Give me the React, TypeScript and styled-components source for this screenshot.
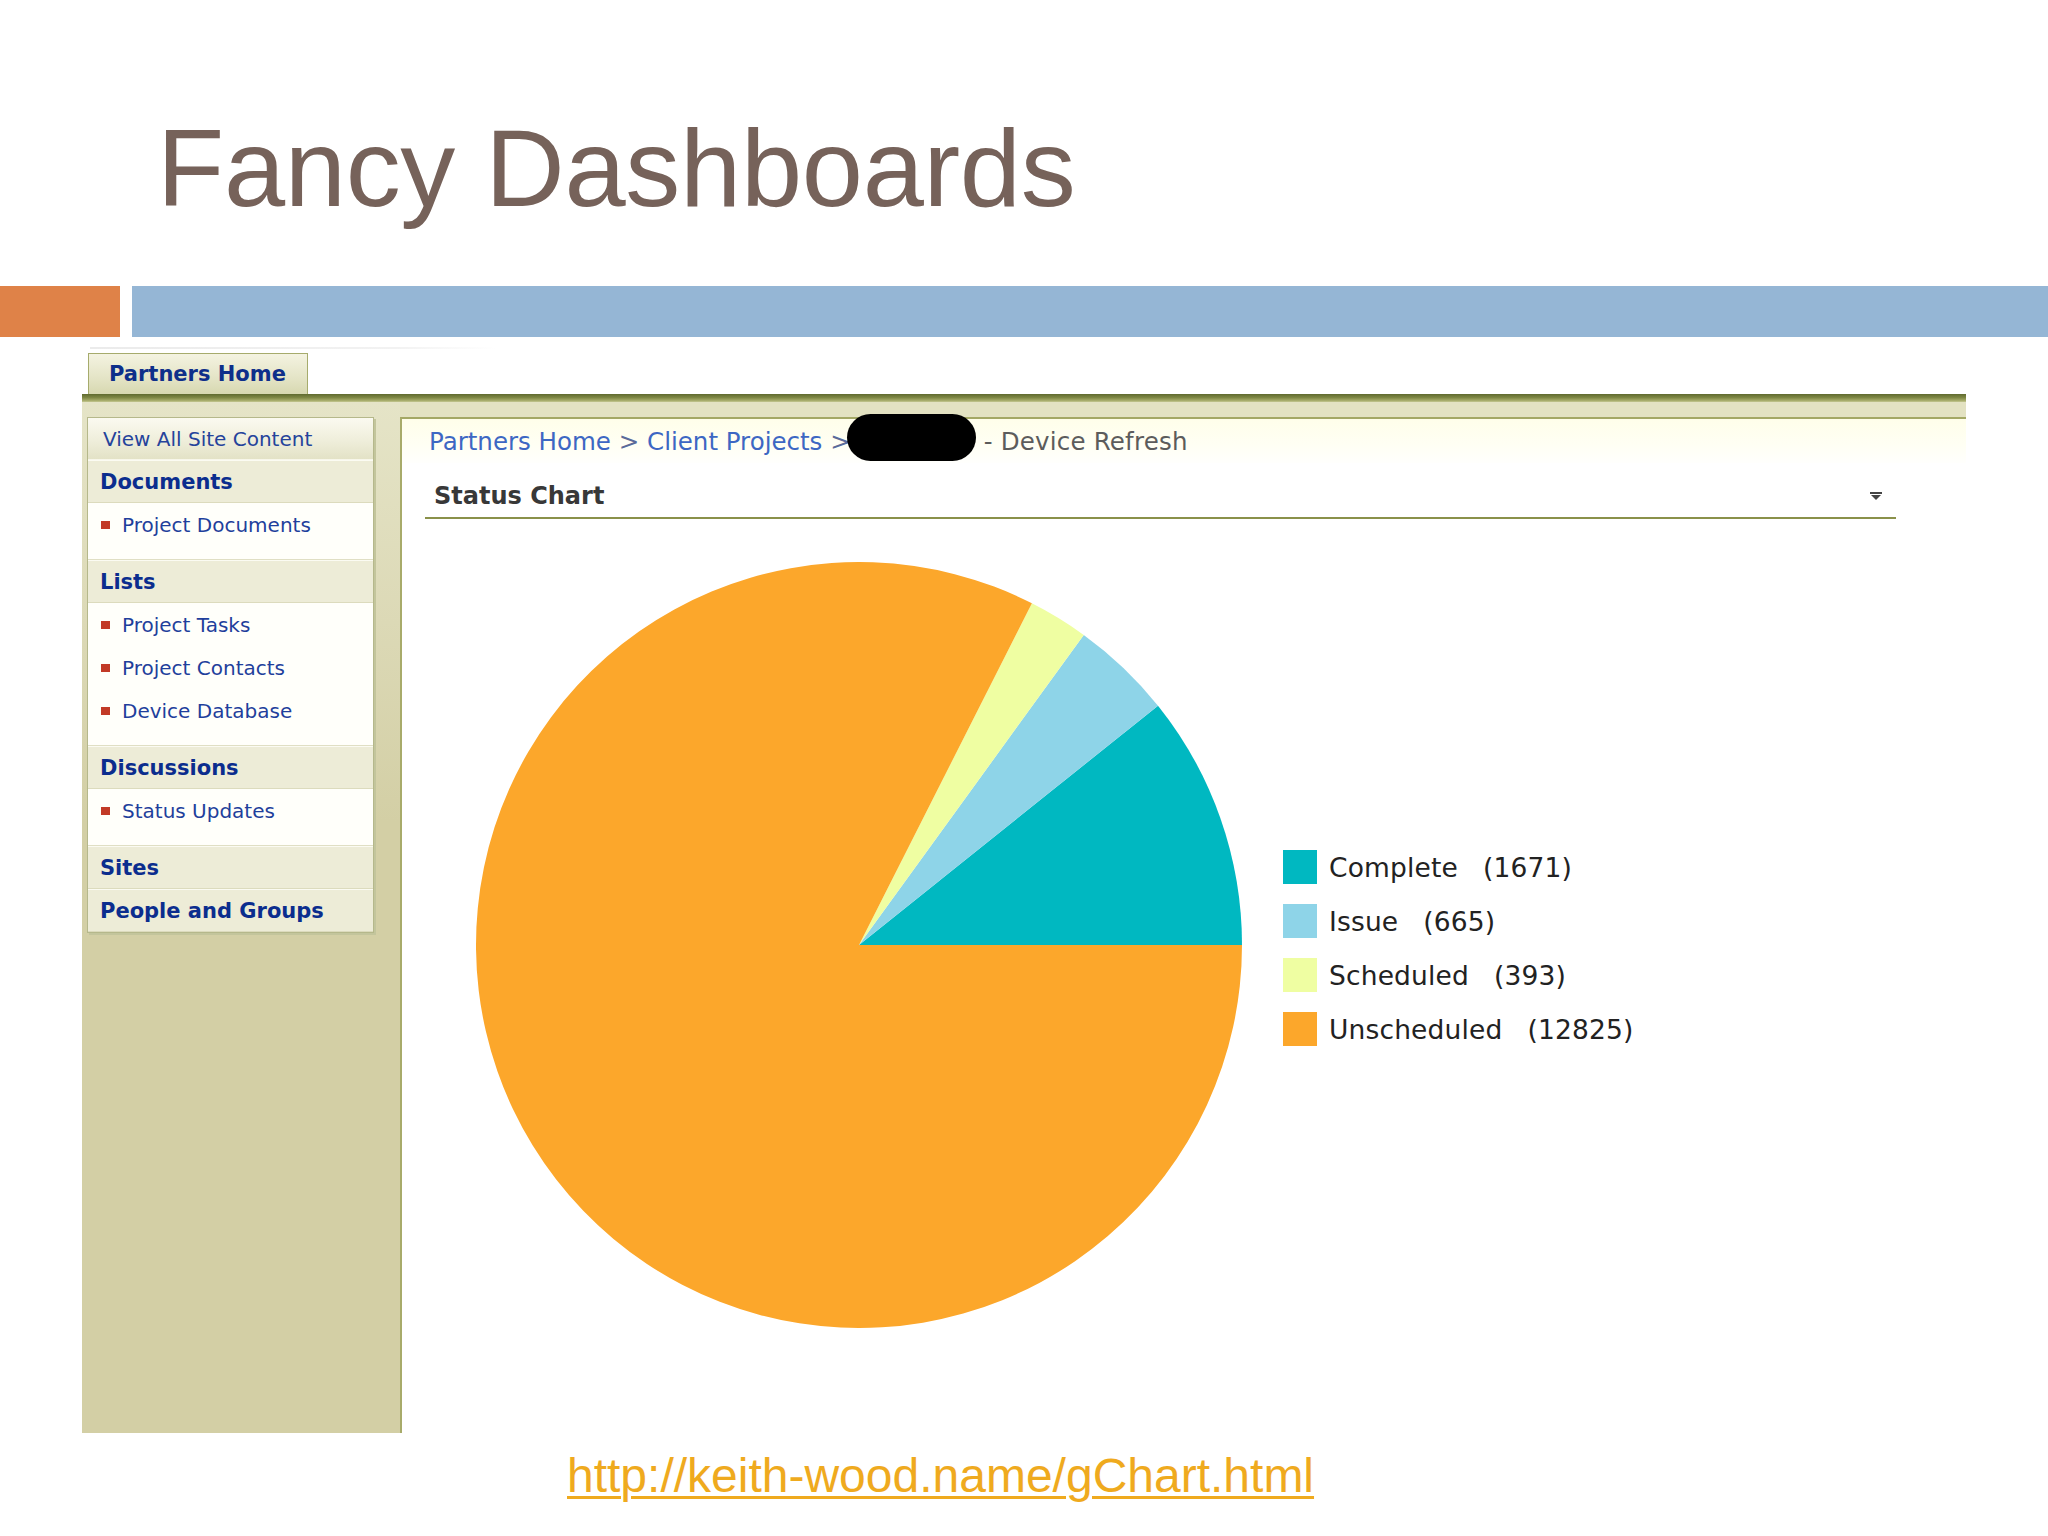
import React from "react";
import styled, { createGlobalStyle } from "styled-components";

// ── Data ─────────────────────────────────────────────────────────

const SLICES = [
  { label: "Complete", value: 1671, color: "#00b8c1" },
  { label: "Issue", value: 665, color: "#8ed4e8" },
  { label: "Scheduled", value: 393, color: "#effea2" },
  { label: "Unscheduled", value: 12825, color: "#fca72b" },
];

type NavBlock =
  | { kind: "link"; label: string }
  | { kind: "header"; label: string; items?: string[] };

const NAV: NavBlock[] = [
  { kind: "link", label: "View All Site Content" },
  { kind: "header", label: "Documents", items: ["Project Documents"] },
  { kind: "header", label: "Lists", items: ["Project Tasks", "Project Contacts", "Device Database"] },
  { kind: "header", label: "Discussions", items: ["Status Updates"] },
  { kind: "header", label: "Sites" },
  { kind: "header", label: "People and Groups" },
];

const UI_FONT = `"DejaVu Sans", Verdana, sans-serif`;
const SLIDE_FONT = `"Liberation Sans", Arial, sans-serif`;

// ── Styled ───────────────────────────────────────────────────────

const GlobalStyle = createGlobalStyle`
  html, body {
    margin: 0;
    padding: 0;
    background: #ffffff;
  }
  body {
    width: 2048px;
    height: 1536px;
    overflow: hidden;
  }
`;

const Slide = styled.div`
  width: 2048px;
  height: 1536px;
  display: flex;
  flex-direction: column;
  background: #ffffff;
`;

const Title = styled.h1`
  margin: 105px 0 0;
  padding-left: 157px;
  font-family: ${SLIDE_FONT};
  font-weight: 400;
  font-size: 110px;
  line-height: 126px;
  letter-spacing: -0.3px;
  color: #76625a;
`;

const AccentBar = styled.div`
  display: flex;
  gap: 12px;
  height: 51px;
  margin-top: 55px;
`;

const AccentBlock = styled.div<{ $color: string; $width?: number }>`
  background: ${({ $color }) => $color};
  ${({ $width }) => ($width ? `width: ${$width}px; flex: none;` : "flex: 1;")}
`;

const Portal = styled.div`
  width: 1884px;
  margin: 10px 0 0 82px;
  display: flex;
  flex-direction: column;
`;

const FadeRule = styled.div`
  width: 407px;
  height: 2px;
  margin-left: 8px;
  background: linear-gradient(to right, #ebebeb, #f2f2f2 75%, rgba(255, 255, 255, 0));
`;

const TabStrip = styled.div`
  display: flex;
  padding: 4px 0 0 6px;
`;

const Tab = styled.div`
  box-sizing: border-box;
  width: 220px;
  height: 41px;
  display: flex;
  align-items: center;
  padding-left: 20px;
  border: 1px solid #a6ab6c;
  border-bottom: none;
  background: linear-gradient(#f4f3e1, #e4e4c6 60%, #d7d8b0);
  font-family: ${UI_FONT};
  font-weight: 700;
  font-size: 21px;
  color: #0e2f8a;
`;

const TopRule = styled.div`
  height: 8px;
  background: linear-gradient(#5f6a2f, #7e8744 45%, #a4aa68 80%, #c4c791);
`;

const Body = styled.div`
  display: flex;
  min-height: 1031px;
`;

const Sidebar = styled.div`
  width: 318px;
  flex: none;
  padding: 15px 0 0 5px;
  box-sizing: border-box;
  background: linear-gradient(#e5e4c7, #dcd9b6 220px, #d3cfa5 420px);
`;

const NavBox = styled.div`
  width: 287px;
  box-sizing: border-box;
  border: 1px solid #b5b88b;
  box-shadow: 2px 2px 0 #c3c59c;
  background: #fffff9;
  font-family: ${UI_FONT};
`;

const NavLink = styled.div`
  height: 41px;
  display: flex;
  align-items: center;
  padding-left: 15px;
  border-bottom: 1px solid #f7f6ea;
  background: linear-gradient(#fbfaf0, #efeedb 55%, #e3e2c6);
  font-size: 20px;
  color: #25439b;
`;

const NavHeader = styled.div`
  box-sizing: border-box;
  height: 43px;
  display: flex;
  align-items: center;
  padding-left: 12px;
  border-top: 1px solid #fbfbf2;
  border-bottom: 1px solid #dcdbbd;
  background: #edecd7;
  font-weight: 700;
  font-size: 21px;
  color: #0b2d8e;
`;

const NavSection = styled.div`
  padding-bottom: 13px;
  border-bottom: 1px solid #e0dfc4;
  background: #fffffa;
`;

const NavItem = styled.div`
  height: 43px;
  display: flex;
  align-items: center;
  gap: 12px;
  padding-left: 13px;
  font-size: 20px;
  color: #1f3f9c;

  &::before {
    content: "";
    width: 9px;
    height: 8px;
    background: #c23a26;
    flex: none;
  }
`;

const ContentColumn = styled.div`
  flex: 1;
  display: flex;
  flex-direction: column;
  padding-top: 15px;
  background: linear-gradient(#e3e2c2, #e3e2c2);
  background-size: 100% 15px;
  background-repeat: no-repeat;
`;

const Panel = styled.div`
  flex: 1;
  display: flex;
  flex-direction: column;
  border-top: 2px solid #a4a865;
  border-left: 2px solid #a8ab6a;
  background: #ffffff;
  font-family: ${UI_FONT};
`;

const Breadcrumb = styled.div`
  height: 44px;
  display: flex;
  align-items: center;
  padding-left: 27px;
  background: linear-gradient(#fffeea, #fffff4 60%, #fffffd);
  font-size: 24.5px;
  white-space: pre;
`;

const Crumb = styled.span`
  color: #3d67c3;
`;

const CrumbSep = styled.span`
  color: #5a6a9a;
`;

const CrumbCurrent = styled.span`
  color: #5c5c5c;
  letter-spacing: 0.2px;
`;

const Redaction = styled.span`
  display: inline-block;
  width: 129px;
  height: 47px;
  margin: -8px 8px 0 -4px;
  border-radius: 24px;
  background: #000000;
`;

const ChartHeader = styled.div`
  box-sizing: border-box;
  height: 56px;
  margin: 0 70px 0 23px;
  display: flex;
  align-items: center;
  justify-content: space-between;
  padding: 12px 14px 0 9px;
  border-bottom: 2px solid #8a914a;
`;

const ChartTitle = styled.span`
  font-weight: 700;
  font-size: 24px;
  color: #383838;
`;

const ChartArea = styled.div`
  display: flex;
  align-items: center;
  gap: 41px;
  padding: 43px 0 0 74px;
`;

const Legend = styled.div`
  display: flex;
  flex-direction: column;
  gap: 20px;
  padding-top: 6px;
`;

const LegendItem = styled.div`
  display: flex;
  align-items: center;
  gap: 12px;
  height: 34px;
`;

const Swatch = styled.span<{ $color: string }>`
  width: 34px;
  height: 34px;
  flex: none;
  background: ${({ $color }) => $color};
`;

const LegendText = styled.span`
  display: flex;
  gap: 25px;
  font-size: 26.5px;
  letter-spacing: 0.15px;
  color: #222222;
`;

const SourceLink = styled.a`
  margin: 15px 0 0 567px;
  align-self: flex-start;
  font-family: ${SLIDE_FONT};
  font-size: 48px;
  color: #efaa1e;
  text-decoration: underline;
  text-decoration-thickness: 3px;
  text-underline-offset: 4px;
`;

// ── Pie ──────────────────────────────────────────────────────────

function PieChart({ size }: { size: number }) {
  const r = size / 2;
  const total = SLICES.reduce((sum, s) => sum + s.value, 0);
  let start = 0;
  return (
    <svg width={size} height={size} viewBox={`0 0 ${size} ${size}`} style={{ flex: "none" }}>
      {SLICES.map((s) => {
        const sweep = (s.value / total) * Math.PI * 2;
        const a0 = start;
        const a1 = start + sweep;
        start = a1;
        const x0 = r + r * Math.cos(a0);
        const y0 = r - r * Math.sin(a0);
        const x1 = r + r * Math.cos(a1);
        const y1 = r - r * Math.sin(a1);
        const large = sweep > Math.PI ? 1 : 0;
        return (
          <path
            key={s.label}
            d={`M ${r} ${r} L ${x0} ${y0} A ${r} ${r} 0 ${large} 0 ${x1} ${y1} Z`}
            fill={s.color}
          />
        );
      })}
    </svg>
  );
}

function MenuArrow() {
  return (
    <svg width="12" height="8" viewBox="0 0 12 8">
      <rect x="0" y="0" width="12" height="2" fill="#444" />
      <polygon points="1,3 11,3 6,8" fill="#444" />
    </svg>
  );
}

// ── App ──────────────────────────────────────────────────────────

export default function App() {
  return (
    <>
      <GlobalStyle />
      <Slide>
        <Title>Fancy Dashboards</Title>
        <AccentBar>
          <AccentBlock $color="#df8248" $width={120} />
          <AccentBlock $color="#95b6d5" />
        </AccentBar>

        <Portal>
          <FadeRule />
          <TabStrip>
            <Tab>Partners Home</Tab>
          </TabStrip>
          <TopRule />
          <Body>
            <Sidebar>
              <NavBox>
                {NAV.map((block) =>
                  block.kind === "link" ? (
                    <NavLink key={block.label}>{block.label}</NavLink>
                  ) : (
                    <React.Fragment key={block.label}>
                      <NavHeader>{block.label}</NavHeader>
                      {block.items && (
                        <NavSection>
                          {block.items.map((item) => (
                            <NavItem key={item}>{item}</NavItem>
                          ))}
                        </NavSection>
                      )}
                    </React.Fragment>
                  )
                )}
              </NavBox>
            </Sidebar>

            <ContentColumn>
              <Panel>
                <Breadcrumb>
                  <Crumb>Partners Home</Crumb>
                  <CrumbSep> &gt; </CrumbSep>
                  <Crumb>Client Projects</Crumb>
                  <CrumbSep> &gt;</CrumbSep>
                  <Redaction />
                  <CrumbCurrent>- Device Refresh</CrumbCurrent>
                </Breadcrumb>
                <ChartHeader>
                  <ChartTitle>Status Chart</ChartTitle>
                  <MenuArrow />
                </ChartHeader>
                <ChartArea>
                  <PieChart size={766} />
                  <Legend>
                    {SLICES.map((s) => (
                      <LegendItem key={s.label}>
                        <Swatch $color={s.color} />
                        <LegendText>
                          <span>{s.label}</span>
                          <span>({s.value})</span>
                        </LegendText>
                      </LegendItem>
                    ))}
                  </Legend>
                </ChartArea>
              </Panel>
            </ContentColumn>
          </Body>
        </Portal>

        <SourceLink href="#">http://keith-wood.name/gChart.html</SourceLink>
      </Slide>
    </>
  );
}
